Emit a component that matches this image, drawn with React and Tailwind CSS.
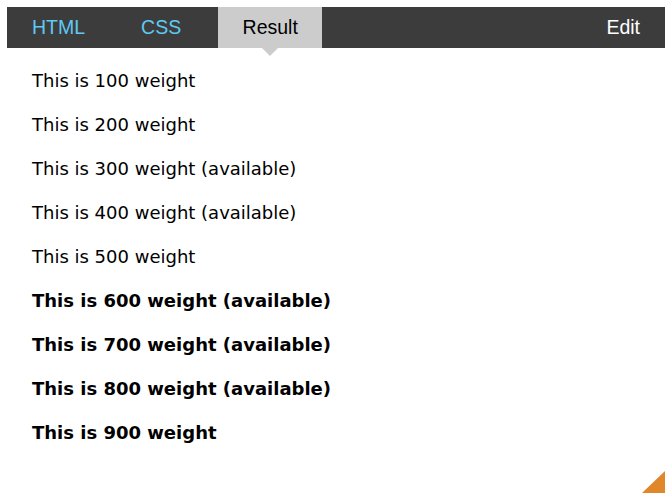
import React from 'react';

const weights = [
  { w: 100, label: 'This is 100 weight', bold: false },
  { w: 200, label: 'This is 200 weight', bold: false },
  { w: 300, label: 'This is 300 weight (available)', bold: false },
  { w: 400, label: 'This is 400 weight (available)', bold: false },
  { w: 500, label: 'This is 500 weight', bold: false },
  { w: 600, label: 'This is 600 weight (available)', bold: true },
  { w: 700, label: 'This is 700 weight (available)', bold: true },
  { w: 800, label: 'This is 800 weight (available)', bold: true },
  { w: 900, label: 'This is 900 weight', bold: true },
];

const App = () => {
  return (
    <div className="relative w-[672px] h-[502px] bg-white overflow-hidden">
      {/* Tab bar */}
      <div className="mx-[7px] mt-[7px] h-[41px] bg-[#3c3c3c] flex items-stretch text-[19.5px] leading-[22px] font-['Liberation_Sans',Arial,sans-serif]">
        <span className="ml-[25px] pt-[9px] text-[#5fc9f3]">HTML</span>
        <span className="ml-[56px] pt-[9px] text-[#5fc9f3]">CSS</span>
        <div className="relative ml-[37px] w-[104px] bg-[#cccccc] pt-[9px] text-center text-black">
          Result
          <span className="absolute left-1/2 -translate-x-1/2 top-full w-0 h-0 border-l-[8px] border-r-[8px] border-t-[8px] border-l-transparent border-r-transparent border-t-[#cccccc]" />
        </div>
        <span className="ml-auto mr-[25px] pt-[9px] text-white">Edit</span>
      </div>

      {/* Result content */}
      <div className="pt-[11px] pl-[32px] flex flex-col font-['DejaVu_Sans',Verdana,sans-serif] text-[18px] leading-[44px] text-black">
        {weights.map((item) => (
          <p key={item.w} className={item.bold ? 'font-bold' : 'font-normal'}>
            {item.label}
          </p>
        ))}
      </div>

      {/* Resize corner */}
      <svg className="absolute right-[7px] bottom-[9px]" width="23" height="22" viewBox="0 0 23 22">
        <polygon points="23,0 23,22 0,22" fill="#e0862b" />
      </svg>
    </div>
  );
};

export default App;
